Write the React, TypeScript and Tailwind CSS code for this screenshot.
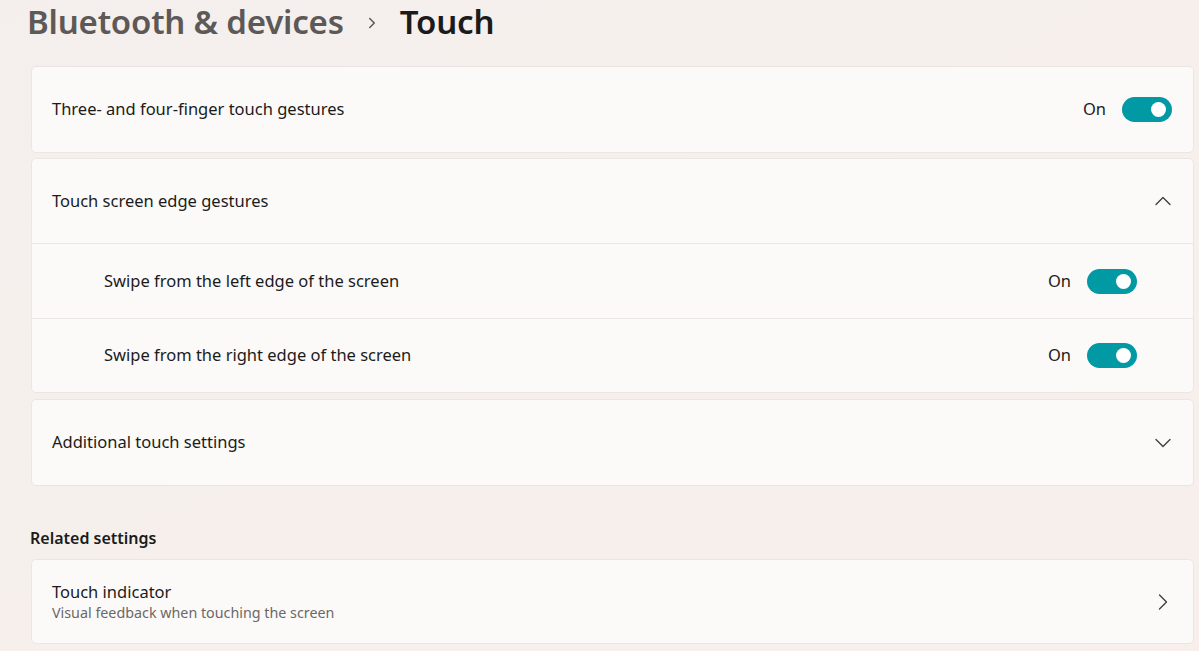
import { ChevronUp, ChevronDown, ChevronRight } from 'lucide-react';

function Toggle() {
  return (
    <div className="flex items-center gap-[16px]">
      <span className="text-[16.5px] text-[#1b1b1b]">On</span>
      <div className="w-[50px] h-[25px] rounded-full bg-[#0099a4] flex items-center justify-end pr-[6px]">
        <div className="w-[15px] h-[15px] rounded-full bg-white" />
      </div>
    </div>
  );
}

export default function App() {
  return (
    <div
      className="w-[1199px] h-[651px] overflow-hidden bg-gradient-to-br from-[#f4efed] to-[#f8efec] pl-[31px] pr-[5px]"
      style={{ fontFamily: '"Noto Sans", "Open Sans", sans-serif' }}
    >
      <div className="flex items-center h-[44px] -ml-[4px] text-[33px] font-semibold tracking-[-0.2px] leading-[44px]">
        <span className="text-[#5d5957]">Bluetooth &amp; devices</span>
        <ChevronRight className="w-[18px] h-[18px] mx-[19px] mt-[2px] text-[#5d5957]" strokeWidth={2} />
        <span className="text-[#1b1b1b]">Touch</span>
      </div>

      <div className="mt-[22px] flex flex-col gap-[5px] text-[#1b1b1b] text-[16.5px]">
        <div className="h-[87px] rounded-[5px] border border-[#ebe6e4] bg-[#fbfaf9] flex items-center justify-between pl-[20px] pr-[21px]">
          <span>Three- and four-finger touch gestures</span>
          <Toggle />
        </div>

        <div className="rounded-[5px] border border-[#ebe6e4] bg-[#fbfaf9] flex flex-col">
          <div className="h-[85px] flex items-center justify-between pl-[20px] pr-[16px] border-b border-[#ebe6e4]">
            <span>Touch screen edge gestures</span>
            <ChevronUp className="w-[28px] h-[28px] text-[#3b3b3b]" strokeWidth={1.1} />
          </div>
          <div className="h-[75px] flex items-center justify-between pl-[72px] pr-[56px] border-b border-[#ebe6e4]">
            <span>Swipe from the left edge of the screen</span>
            <Toggle />
          </div>
          <div className="h-[73px] flex items-center justify-between pl-[72px] pr-[56px]">
            <span>Swipe from the right edge of the screen</span>
            <Toggle />
          </div>
        </div>

        <div className="mt-[1px] h-[87px] rounded-[5px] border border-[#ebe6e4] bg-[#fbfaf9] flex items-center justify-between pl-[20px] pr-[16px]">
          <span>Additional touch settings</span>
          <ChevronDown className="w-[28px] h-[28px] text-[#3b3b3b]" strokeWidth={1.1} />
        </div>
      </div>

      <div className="mt-[40px] -ml-[1px] text-[16px] font-semibold text-[#1b1b1b]">Related settings</div>

      <div className="mt-[9px] h-[85px] rounded-[5px] border border-[#ebe6e4] bg-[#fbfaf9] flex items-center justify-between pl-[20px] pr-[16px]">
        <div className="flex flex-col">
          <span className="text-[16.5px] text-[#1b1b1b] leading-[21px]">Touch indicator</span>
          <span className="text-[14.3px] text-[#6b6866] leading-[21px]">Visual feedback when touching the screen</span>
        </div>
        <ChevronRight className="w-[28px] h-[28px] text-[#3b3b3b]" strokeWidth={1.1} />
      </div>
    </div>
  );
}
